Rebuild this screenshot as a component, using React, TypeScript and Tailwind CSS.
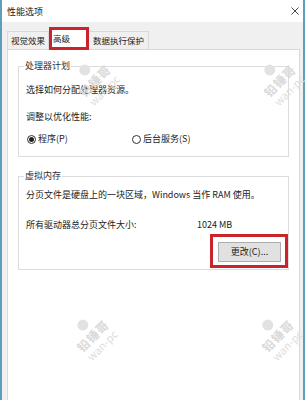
import React from 'react';

const font = { fontFamily: '"Noto Sans CJK SC", "Noto Sans", sans-serif' };

function Watermark({ className }: { className: string }) {
  return (
    <div
      className={`pointer-events-none absolute w-[56px] h-[56px] -rotate-45 flex flex-col items-center justify-center leading-none ${className}`}
    >
      <div className="w-[11px] h-[11px] rounded-full bg-[#e2e2e2] mb-[3px]" />
      <div className="text-[12px] text-[#d9d9d9] font-bold tracking-[1px]">铅锤哥</div>
      <div className="text-[11px] text-[#dddddd] mt-[2px]">wan-pc</div>
    </div>
  );
}

function Radio({ checked, label }: { checked?: boolean; label: string }) {
  return (
    <div className="flex items-center">
      <span className="w-[9px] h-[9px] rounded-full border border-[#333] flex items-center justify-center">
        {checked && <span className="w-[5px] h-[5px] rounded-full bg-[#222]" />}
      </span>
      <span className="ml-[2px]">{label}</span>
    </div>
  );
}

export default function App() {
  return (
    <div className="relative w-[307px] h-[400px] overflow-hidden bg-white text-[#222]" style={font}>
      <div className="w-[305px] h-[430px] border-x-2 border-[#5f9dbb] flex flex-col">
        {/* Title bar */}
        <div className="h-[22px] bg-white flex items-center justify-between pl-[5px] pr-[4px]">
          <span className="text-[9px] leading-none">性能选项</span>
          <svg width="8" height="8" viewBox="0 0 8 8" className="text-[#333]">
            <path d="M0.5 0.5L7.5 7.5M7.5 0.5L0.5 7.5" stroke="currentColor" strokeWidth="0.9" />
          </svg>
        </div>

        <div className="flex-1 bg-[#f0f0f0] pl-[5px] pr-[3px] flex flex-col">
          {/* Tabs */}
          <div className="h-[27px] flex items-end text-[8.5px] leading-none">
            <div className="h-[18px] px-[3px] border border-b-0 border-[#d9d9d9] flex items-center">视觉效果</div>
            <div className="relative z-10 -mb-[1px] h-[23px] w-[40px] border-[3px] border-[#c9232b] bg-white flex items-center pl-[1px]">
              高级
            </div>
            <div className="h-[18px] px-[4px] border-t border-r border-[#d9d9d9] flex items-center">数据执行保护</div>
          </div>

          {/* Panel */}
          <div className="flex-1 bg-white border border-[#d9d9d9] px-[10px] pt-[10px] text-[9px] leading-[12px]">
            <fieldset className="border border-[#dcdcdc] pl-[5px] pr-[5px] pb-[11px]">
              <legend className="px-[1px] leading-[12px] text-[#333]">处理器计划</legend>
              <div className="pl-[2px]">
                <p className="pt-[12px]">选择如何分配处理器资源。</p>
                <p className="mt-[15px]">调整以优化性能:</p>
                <div className="mt-[10px] h-[12px] flex items-center">
                  <div className="w-[105px] pl-[1px]">
                    <Radio checked label="程序(P)" />
                  </div>
                  <div className="pl-[1px]">
                    <Radio label="后台服务(S)" />
                  </div>
                </div>
              </div>
            </fieldset>

            <fieldset className="mt-[13px] border border-[#dcdcdc] pl-[5px] pr-[5px] pb-[1px]">
              <legend className="px-[1px] leading-[12px] text-[#333]">虚拟内存</legend>
              <div className="pl-[2px]">
                <p className="pt-[7px] whitespace-nowrap">分页文件是硬盘上的一块区域，Windows 当作 RAM 使用。</p>
                <div className="mt-[18px] flex">
                  <span className="w-[171px]">所有驱动器总分页文件大小:</span>
                  <span>1024 MB</span>
                </div>
                <div className="mt-[3px] -mr-[5px] flex justify-end">
                  <div className="w-[78px] h-[34px] border-[3px] border-[#c9232b] pt-[5px] pl-[5px] pr-[4px]">
                    <div className="h-[20px] bg-[#e1e1e1] border border-[#adadad] flex items-center justify-center">
                      更改(C)...
                    </div>
                  </div>
                </div>
              </div>
            </fieldset>
          </div>
        </div>
      </div>

      {/* Watermarks */}
      <Watermark className="left-[66px] top-[52px]" />
      <Watermark className="left-[251px] top-[52px]" />
      <Watermark className="left-[64px] top-[307px]" />
      <Watermark className="left-[249px] top-[307px]" />
    </div>
  );
}
